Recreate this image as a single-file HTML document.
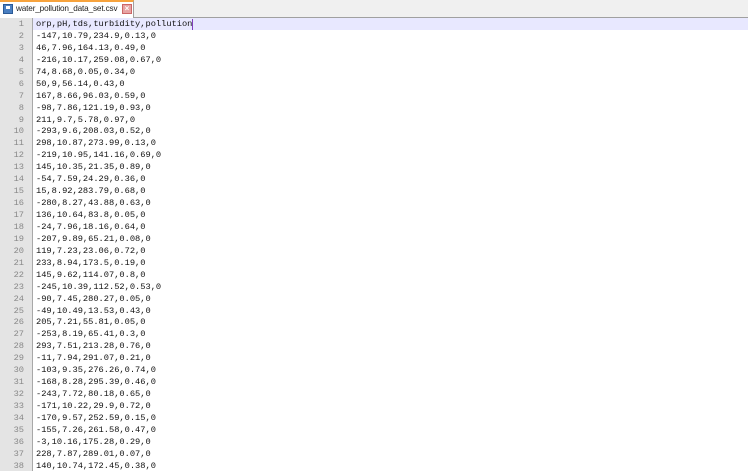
<!DOCTYPE html>
<html><head><style>
body{margin:0;width:748px;height:471px;overflow:hidden;background:#fff;font-family:"Liberation Sans",sans-serif}
.bar{position:absolute;left:0;top:0;width:748px;height:17px;background:#f0f0f0;border-bottom:1px solid #a0a0a0}
.tab{position:absolute;left:0;top:0;width:134px;height:18px;background:#fff;border-top:2px solid #f7a33d;border-right:1px solid #a0a0a0;box-sizing:border-box;font-size:8.2px;color:#222;line-height:14px}
.tab .ic{position:absolute;left:3px;top:2px;width:10px;height:10px;background:#4a7fc1;border:1px solid #2b5a96;box-sizing:border-box}
.tab .ic:after{content:"";position:absolute;left:2px;top:1px;width:4px;height:3px;background:#fff}
.tab .t{position:absolute;left:16px;top:0;letter-spacing:-0.15px}
.tab .x{position:absolute;left:122px;top:2px;width:10px;height:10px;background:#e7a3a3;border:1px solid #c66;box-sizing:border-box;font-size:8px;line-height:8px;text-align:center;color:#fff;font-weight:bold}
.gut{position:absolute;left:0;top:18px;width:32px;height:453px;background:#e4e4e4;border-right:1px solid #a8a8a8}
.hl{position:absolute;left:33px;top:18px;width:715px;height:12px;background:#e8e8ff}
.cur{position:absolute;left:192px;top:19px;width:1px;height:11px;background:#8040c0}
.lines{position:absolute;left:0;top:19px;font-family:"Liberation Mono",monospace;font-size:8.7px;line-height:11.95px;color:#111}
.l{height:11.95px;white-space:pre;position:relative}
.n{position:absolute;left:0;width:24px;text-align:right;color:#888}
.c{position:absolute;left:36px}
</style></head><body>
<div class="bar"></div>
<div class="tab"><div class="ic"></div><span class="t">water_pollution_data_set.csv</span><div class="x">×</div></div>
<div class="gut"></div><div class="hl"></div><div class="cur"></div>
<div class="lines">
<div class="l"><span class="n">1</span><span class="c">orp,pH,tds,turbidity,pollution</span></div>
<div class="l"><span class="n">2</span><span class="c">-147,10.79,234.9,0.13,0</span></div>
<div class="l"><span class="n">3</span><span class="c">46,7.96,164.13,0.49,0</span></div>
<div class="l"><span class="n">4</span><span class="c">-216,10.17,259.08,0.67,0</span></div>
<div class="l"><span class="n">5</span><span class="c">74,8.68,0.05,0.34,0</span></div>
<div class="l"><span class="n">6</span><span class="c">50,9,56.14,0.43,0</span></div>
<div class="l"><span class="n">7</span><span class="c">167,8.66,96.03,0.59,0</span></div>
<div class="l"><span class="n">8</span><span class="c">-98,7.86,121.19,0.93,0</span></div>
<div class="l"><span class="n">9</span><span class="c">211,9.7,5.78,0.97,0</span></div>
<div class="l"><span class="n">10</span><span class="c">-293,9.6,208.03,0.52,0</span></div>
<div class="l"><span class="n">11</span><span class="c">298,10.87,273.99,0.13,0</span></div>
<div class="l"><span class="n">12</span><span class="c">-219,10.95,141.16,0.69,0</span></div>
<div class="l"><span class="n">13</span><span class="c">145,10.35,21.35,0.89,0</span></div>
<div class="l"><span class="n">14</span><span class="c">-54,7.59,24.29,0.36,0</span></div>
<div class="l"><span class="n">15</span><span class="c">15,8.92,283.79,0.68,0</span></div>
<div class="l"><span class="n">16</span><span class="c">-280,8.27,43.88,0.63,0</span></div>
<div class="l"><span class="n">17</span><span class="c">136,10.64,83.8,0.05,0</span></div>
<div class="l"><span class="n">18</span><span class="c">-24,7.96,18.16,0.64,0</span></div>
<div class="l"><span class="n">19</span><span class="c">-207,9.89,65.21,0.08,0</span></div>
<div class="l"><span class="n">20</span><span class="c">119,7.23,23.06,0.72,0</span></div>
<div class="l"><span class="n">21</span><span class="c">233,8.94,173.5,0.19,0</span></div>
<div class="l"><span class="n">22</span><span class="c">145,9.62,114.07,0.8,0</span></div>
<div class="l"><span class="n">23</span><span class="c">-245,10.39,112.52,0.53,0</span></div>
<div class="l"><span class="n">24</span><span class="c">-90,7.45,280.27,0.05,0</span></div>
<div class="l"><span class="n">25</span><span class="c">-49,10.49,13.53,0.43,0</span></div>
<div class="l"><span class="n">26</span><span class="c">205,7.21,55.81,0.05,0</span></div>
<div class="l"><span class="n">27</span><span class="c">-253,8.19,65.41,0.3,0</span></div>
<div class="l"><span class="n">28</span><span class="c">293,7.51,213.28,0.76,0</span></div>
<div class="l"><span class="n">29</span><span class="c">-11,7.94,291.07,0.21,0</span></div>
<div class="l"><span class="n">30</span><span class="c">-103,9.35,276.26,0.74,0</span></div>
<div class="l"><span class="n">31</span><span class="c">-168,8.28,295.39,0.46,0</span></div>
<div class="l"><span class="n">32</span><span class="c">-243,7.72,80.18,0.65,0</span></div>
<div class="l"><span class="n">33</span><span class="c">-171,10.22,29.9,0.72,0</span></div>
<div class="l"><span class="n">34</span><span class="c">-170,9.57,252.59,0.15,0</span></div>
<div class="l"><span class="n">35</span><span class="c">-155,7.26,261.58,0.47,0</span></div>
<div class="l"><span class="n">36</span><span class="c">-3,10.16,175.28,0.29,0</span></div>
<div class="l"><span class="n">37</span><span class="c">228,7.87,289.01,0.07,0</span></div>
<div class="l"><span class="n">38</span><span class="c">140,10.74,172.45,0.38,0</span></div>
</div>
</body></html>
